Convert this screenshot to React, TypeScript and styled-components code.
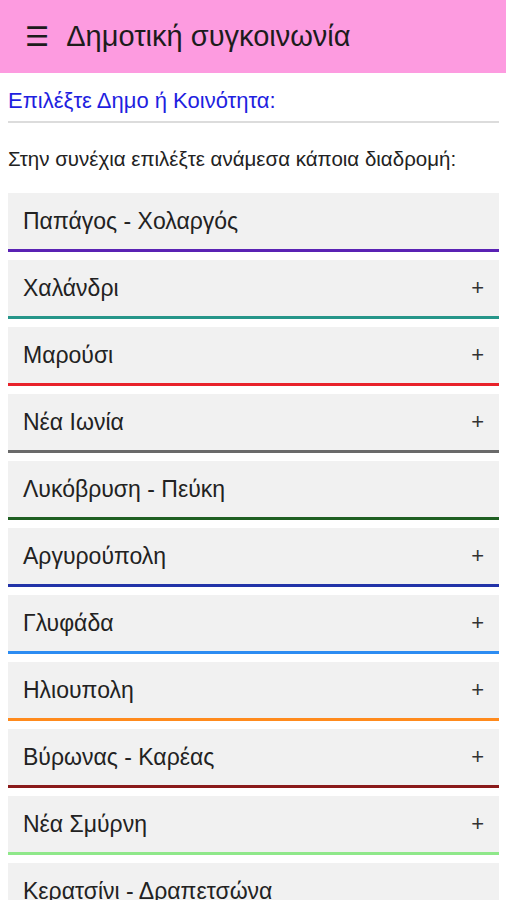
import React from "react";
import styled, { createGlobalStyle } from "styled-components";

const Global = createGlobalStyle`
  body { margin: 0; background: #fff; font-family: "Liberation Sans", Arial, sans-serif; }
`;

const Header = styled.header`
  height: 73px;
  background: #fd9be0;
  display: flex;
  align-items: center;
  padding-left: 25px;
  gap: 17px;
  color: #1c1c1c;
`;

const Burger = styled.span`
  font-size: 27px;
  line-height: 1;
  font-family: "DejaVu Sans", sans-serif;
`;

const Title = styled.h1`
  margin: 0;
  font-weight: 400;
  font-size: 29px;
`;

const Content = styled.main`
  padding: 0 7px 0 8px;
`;

const Picker = styled.div`
  color: #1f1fe0;
  font-size: 22px;
  line-height: 25px;
  padding: 15px 0 8px;
  border-bottom: 2px solid #dcdcdc;
`;

const Hint = styled.p`
  margin: 0;
  padding: 24px 0 22px;
  font-size: 20.5px;
  line-height: 24px;
  color: #222;
`;

const List = styled.div`
  display: flex;
  flex-direction: column;
  gap: 8px;
`;

const Item = styled.div<{ $c: string }>`
  height: 56px;
  flex-shrink: 0;
  background: #f1f1f1;
  border-bottom: 3px solid ${(p) => p.$c};
  display: flex;
  align-items: center;
  justify-content: space-between;
  padding: 0 15px;
  font-size: 23px;
  color: #222;
`;

const Plus = styled.span`
  font-size: 22px;
  color: #333;
`;

const items: [string, string, boolean][] = [
  ["Παπάγος - Χολαργός", "#5a22b4", false],
  ["Χαλάνδρι", "#26968a", true],
  ["Μαρούσι", "#e8222a", true],
  ["Νέα Ιωνία", "#6a6a6a", true],
  ["Λυκόβρυση - Πεύκη", "#1f5f22", false],
  ["Αργυρούπολη", "#2233a8", true],
  ["Γλυφάδα", "#2c8cf2", true],
  ["Ηλιουπολη", "#ff8a1c", true],
  ["Βύρωνας - Καρέας", "#8a1a1a", true],
  ["Νέα Σμύρνη", "#8fe88a", true],
  ["Κερατσίνι - Δραπετσώνα", "#f28a1c", false],
];

export default function App() {
  return (
    <>
      <Global />
      <Header>
        <Burger>☰</Burger>
        <Title>Δημοτική συγκοινωνία</Title>
      </Header>
      <Content>
        <Picker>Επιλέξτε Δημο ή Κοινότητα:</Picker>
        <Hint>Στην συνέχια επιλέξτε ανάμεσα κάποια διαδρομή:</Hint>
        <List>
          {items.map(([name, c, plus]) => (
            <Item key={name} $c={c}>
              <span>{name}</span>
              {plus && <Plus>+</Plus>}
            </Item>
          ))}
        </List>
      </Content>
    </>
  );
}
